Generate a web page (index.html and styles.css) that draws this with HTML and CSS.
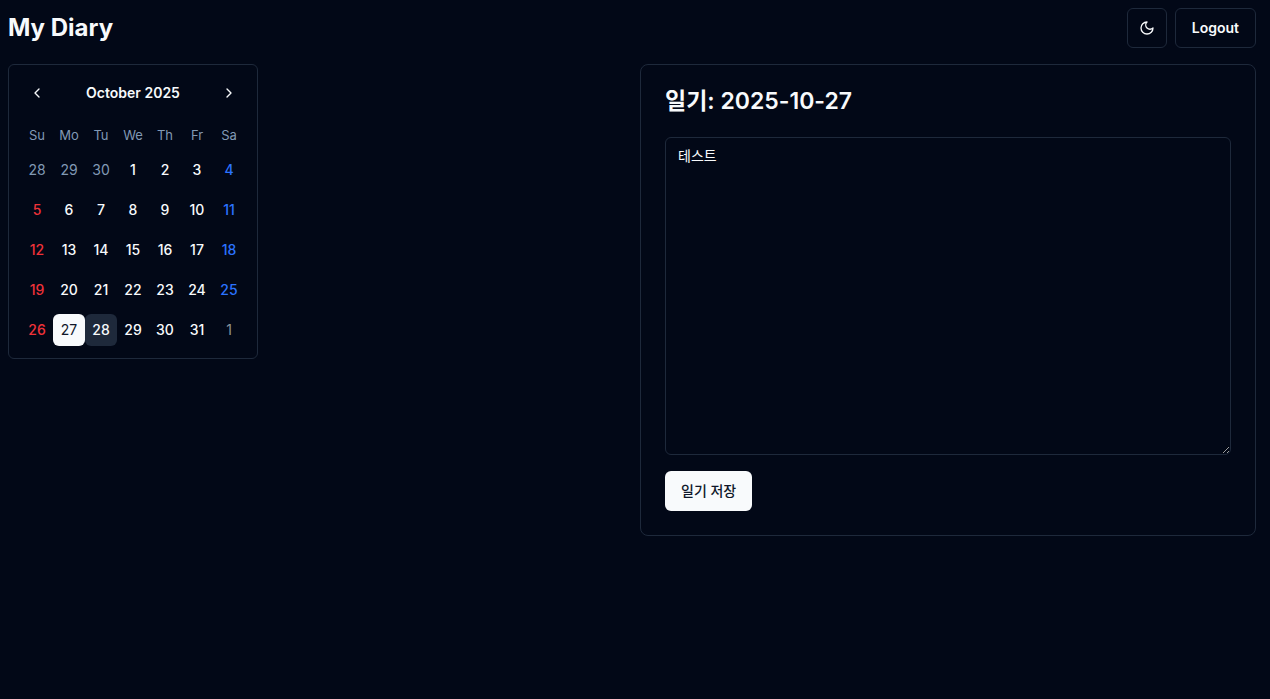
FILE: index.html
```
<!DOCTYPE html>
<html lang="ko">
<head>
<meta charset="utf-8">
<meta name="viewport" content="width=device-width, initial-scale=1">
<title>My Diary</title>
<link rel="stylesheet" href="styles.css">
</head>
<body>
<div class="page">
  <header class="header">
    <h1 class="brand">My Diary</h1>
    <div class="actions">
      <button class="btn btn-outline btn-icon" type="button" aria-label="Toggle theme">
        <svg class="icon" viewBox="0 0 24 24" aria-hidden="true"><path d="M12 3a6 6 0 0 0 9 9 9 9 0 1 1-9-9Z"/></svg>
      </button>
      <button class="btn btn-outline" type="button">Logout</button>
    </div>
  </header>
  <main class="columns">
    <section class="calendar" aria-labelledby="month">
      <div class="caption">
        <button class="nav" type="button" aria-label="Previous month"><svg class="icon" viewBox="0 0 24 24" aria-hidden="true"><path d="m15 18-6-6 6-6"/></svg></button>
        <h2 class="month" id="month">October 2025</h2>
        <button class="nav" type="button" aria-label="Next month"><svg class="icon" viewBox="0 0 24 24" aria-hidden="true"><path d="m9 18 6-6-6-6"/></svg></button>
      </div>
      <table class="days">
        <thead>
          <tr><th scope="col">Su</th><th scope="col">Mo</th><th scope="col">Tu</th><th scope="col">We</th><th scope="col">Th</th><th scope="col">Fr</th><th scope="col">Sa</th></tr>
        </thead>
        <tbody>
          <tr><td><button class="day outside">28</button></td><td><button class="day outside">29</button></td><td><button class="day outside">30</button></td><td><button class="day">1</button></td><td><button class="day">2</button></td><td><button class="day">3</button></td><td><button class="day sat">4</button></td></tr>
          <tr><td><button class="day sun">5</button></td><td><button class="day">6</button></td><td><button class="day">7</button></td><td><button class="day">8</button></td><td><button class="day">9</button></td><td><button class="day">10</button></td><td><button class="day sat">11</button></td></tr>
          <tr><td><button class="day sun">12</button></td><td><button class="day">13</button></td><td><button class="day">14</button></td><td><button class="day">15</button></td><td><button class="day">16</button></td><td><button class="day">17</button></td><td><button class="day sat">18</button></td></tr>
          <tr><td><button class="day sun">19</button></td><td><button class="day">20</button></td><td><button class="day">21</button></td><td><button class="day">22</button></td><td><button class="day">23</button></td><td><button class="day">24</button></td><td><button class="day sat">25</button></td></tr>
          <tr><td><button class="day sun">26</button></td><td><button class="day selected" aria-pressed="true">27</button></td><td><button class="day today" aria-current="date">28</button></td><td><button class="day">29</button></td><td><button class="day">30</button></td><td><button class="day">31</button></td><td><button class="day outside next">1</button></td></tr>
        </tbody>
      </table>
    </section>
    <section class="card">
      <h2 class="card-title" id="entry-title">일기: 2025-10-27</h2>
      <form class="entry">
        <textarea class="text" aria-labelledby="entry-title" spellcheck="false">테스트</textarea>
        <button class="btn btn-primary" type="button">일기 저장</button>
      </form>
    </section>
  </main>
</div>
</body>
</html>
```
FILE: styles.css
```
* {
  box-sizing: border-box;
}

body {
  margin: 0;
  background: #020817;
  color: #f8fafc;
  font-family: Inter, "Noto Sans CJK KR", sans-serif;
  font-size: 14px;
  line-height: 20px;
}

h1, h2 {
  margin: 0;
}

button, textarea {
  font: inherit;
  color: inherit;
}

button {
  padding: 0;
  border: 0;
  background: transparent;
  cursor: pointer;
}

.page {
  display: flex;
  flex-direction: column;
  gap: 16px;
  padding: 8px 14px 8px 8px;
}

.header {
  display: flex;
  align-items: center;
  justify-content: space-between;
}

.brand {
  font-size: 24px;
  line-height: 32px;
  font-weight: 700;
}

.actions {
  display: flex;
  gap: 8px;
}

.btn {
  display: inline-flex;
  align-items: center;
  justify-content: center;
  height: 40px;
  padding: 0 16px;
  border-radius: 6px;
  font-weight: 500;
}

.btn-outline {
  border: 1px solid #1e293b;
  font-weight: 600;
}

.btn-icon {
  width: 40px;
  padding: 0;
}

.btn-primary {
  background: #f8fafc;
  color: #0f172a;
}

.icon {
  width: 16px;
  height: 16px;
  fill: none;
  stroke: currentColor;
  stroke-width: 2;
  stroke-linecap: round;
  stroke-linejoin: round;
}

.columns {
  display: grid;
  grid-template-columns: 1fr 1fr;
  gap: 16px;
  align-items: start;
}

.calendar {
  justify-self: start;
  padding: 12px;
  border: 1px solid #1e293b;
  border-radius: 6px;
}

.caption {
  display: flex;
  align-items: center;
  justify-content: space-between;
  margin-bottom: 16px;
}

.nav {
  display: flex;
  align-items: center;
  justify-content: center;
  width: 32px;
  height: 32px;
}

.month {
  font-size: 14px;
  font-weight: 600;
}

.days {
  border-collapse: collapse;
}

.days th {
  width: 32px;
  height: 21px;
  padding: 0;
  vertical-align: top;
  color: #8199b5;
  font-size: 13px;
  line-height: 20px;
  font-weight: 400;
}

.days td {
  padding: 8px 0 0;
}

.day {
  display: block;
  width: 32px;
  height: 32px;
  border-radius: 6px;
  font-weight: 500;
}

.sun {
  color: #ef3239;
}

.sat {
  color: #2b73ff;
}

.outside {
  color: #8199b5;
  font-weight: 400;
}

.next {
  color: #8d949b;
}

.selected {
  background: #f8fafc;
  color: #0f172a;
  font-weight: 400;
}

.today {
  background: #1e293b;
}

.card {
  padding: 24px;
  border: 1px solid #1e293b;
  border-radius: 8px;
}

.card-title {
  margin-bottom: 24px;
  font-size: 23px;
  line-height: 24px;
  font-weight: 600;
}

.entry {
  display: flex;
  flex-direction: column;
  align-items: flex-start;
  gap: 16px;
}

.text {
  display: block;
  width: 100%;
  height: 318px;
  padding: 8px 12px;
  border: 1px solid #1e293b;
  border-radius: 6px;
  background: transparent;
  resize: vertical;
}
```
